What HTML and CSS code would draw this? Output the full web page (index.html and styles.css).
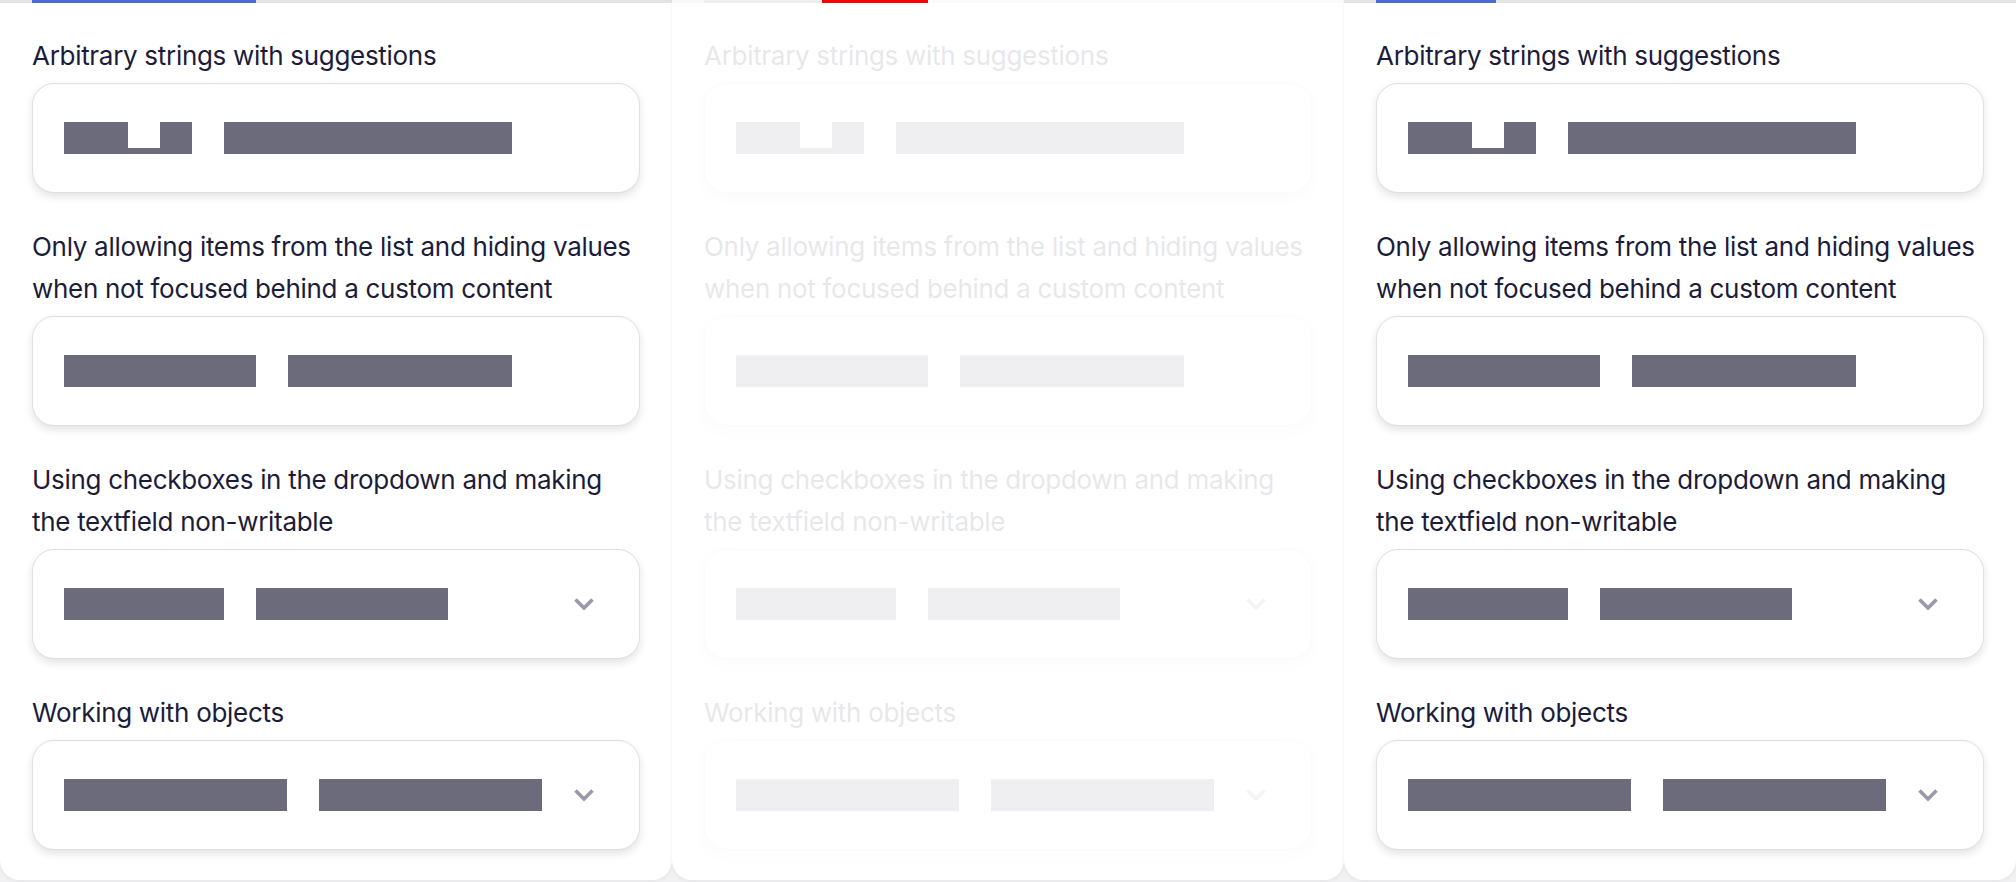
FILE: index.html
```html
<!DOCTYPE html>
<html lang="en">
<head>
<meta charset="utf-8">
<title>Autocomplete examples</title>
<link rel="stylesheet" href="styles.css">
</head>
<body>
<div class="panels">

  <section class="panel">
    <div class="track"><span class="ind ind-wide"></span></div>
    <div class="body">
      <div class="field">
        <div class="label">Arbitrary strings with suggestions</div>
        <div class="box">
          <div class="notched"><i class="seg s64"></i><i class="seg stub"></i><i class="seg s32"></i></div>
          <div class="bar w288"></div>
        </div>
      </div>
      <div class="field">
        <div class="label">Only allowing items from the list and hiding values when not focused behind a custom content</div>
        <div class="box">
          <div class="bar w192"></div>
          <div class="bar w224"></div>
        </div>
      </div>
      <div class="field">
        <div class="label">Using checkboxes in the dropdown and making the textfield non-writable</div>
        <div class="box">
          <div class="bar w160"></div>
          <div class="bar w192"></div>
          <svg class="chev" viewBox="0 0 20 12" width="20" height="12"><polyline points="1.5,1.5 10,10 18.5,1.5"/></svg>
        </div>
      </div>
      <div class="field">
        <div class="label">Working with objects</div>
        <div class="box">
          <div class="bar w224"></div>
          <div class="bar w224"></div>
          <svg class="chev" viewBox="0 0 20 12" width="20" height="12"><polyline points="1.5,1.5 10,10 18.5,1.5"/></svg>
        </div>
      </div>
    </div>
  </section>

  <section class="panel">
    <div class="track track-faded"><span class="tf-a"></span><span class="tf-b"></span><span class="tf-red"></span></div>
    <div class="body faded">
      <div class="field">
        <div class="label">Arbitrary strings with suggestions</div>
        <div class="box">
          <div class="notched"><i class="seg s64"></i><i class="seg stub"></i><i class="seg s32"></i></div>
          <div class="bar w288"></div>
        </div>
      </div>
      <div class="field">
        <div class="label">Only allowing items from the list and hiding values when not focused behind a custom content</div>
        <div class="box">
          <div class="bar w192"></div>
          <div class="bar w224"></div>
        </div>
      </div>
      <div class="field">
        <div class="label">Using checkboxes in the dropdown and making the textfield non-writable</div>
        <div class="box">
          <div class="bar w160"></div>
          <div class="bar w192"></div>
          <svg class="chev" viewBox="0 0 20 12" width="20" height="12"><polyline points="1.5,1.5 10,10 18.5,1.5"/></svg>
        </div>
      </div>
      <div class="field">
        <div class="label">Working with objects</div>
        <div class="box">
          <div class="bar w224"></div>
          <div class="bar w224"></div>
          <svg class="chev" viewBox="0 0 20 12" width="20" height="12"><polyline points="1.5,1.5 10,10 18.5,1.5"/></svg>
        </div>
      </div>
    </div>
  </section>

  <section class="panel">
    <div class="track"><span class="ind ind-narrow"></span></div>
    <div class="body">
      <div class="field">
        <div class="label">Arbitrary strings with suggestions</div>
        <div class="box">
          <div class="notched"><i class="seg s64"></i><i class="seg stub"></i><i class="seg s32"></i></div>
          <div class="bar w288"></div>
        </div>
      </div>
      <div class="field">
        <div class="label">Only allowing items from the list and hiding values when not focused behind a custom content</div>
        <div class="box">
          <div class="bar w192"></div>
          <div class="bar w224"></div>
        </div>
      </div>
      <div class="field">
        <div class="label">Using checkboxes in the dropdown and making the textfield non-writable</div>
        <div class="box">
          <div class="bar w160"></div>
          <div class="bar w192"></div>
          <svg class="chev" viewBox="0 0 20 12" width="20" height="12"><polyline points="1.5,1.5 10,10 18.5,1.5"/></svg>
        </div>
      </div>
      <div class="field">
        <div class="label">Working with objects</div>
        <div class="box">
          <div class="bar w224"></div>
          <div class="bar w224"></div>
          <svg class="chev" viewBox="0 0 20 12" width="20" height="12"><polyline points="1.5,1.5 10,10 18.5,1.5"/></svg>
        </div>
      </div>
    </div>
  </section>

</div>
</body>
</html>
```

FILE: styles.css
```css
html, body {
  margin: 0;
  padding: 0;
}

body {
  background: #f1f1f3;
  font-family: Inter, "Noto Sans", sans-serif;
  color: #1c1c3a;
  overflow: hidden;
}

.panels {
  display: grid;
  grid-template-columns: repeat(3, 672px);
  height: 882px;
}

.panel {
  background: #ffffff;
  border-radius: 0 0 20px 20px;
  height: 880px;
  box-shadow: 0 1px 4px rgba(0, 0, 0, 0.06);
  display: flex;
  flex-direction: column;
}

.track {
  height: 3px;
  background: #e4e4e6;
  display: flex;
  flex: none;
}

.ind {
  display: block;
  height: 3px;
  margin-left: 32px;
  background: #4c6ad6;
}

.ind-wide { width: 224px; }
.ind-narrow { width: 120px; }

.track-faded {
  background: #fafafa;
}

.tf-a { width: 32px; background: #f8f8f8; }
.tf-b { width: 118px; background: #eeeeee; }
.tf-red { width: 106px; background: #ff0000; }

.body {
  padding: 30px 32px 0;
}

.faded {
  opacity: 0.1;
}

.field {
  margin-bottom: 31px;
}

.label {
  font-size: 26px;
  line-height: 42px;
  padding-top: 2px;
  margin-bottom: 6px;
  letter-spacing: -0.3px;
  margin-right: -2px;
}

.box {
  box-sizing: border-box;
  height: 110px;
  border: 1px solid #dedee3;
  border-radius: 22px;
  background: #ffffff;
  box-shadow: 0 4px 8px rgba(0, 0, 0, 0.11);
  display: flex;
  align-items: center;
  gap: 32px;
  padding: 0 45px 0 31px;
}

.bar {
  height: 32px;
  background: #6b6b7c;
}

.w160 { width: 160px; }
.w192 { width: 192px; }
.w224 { width: 224px; }
.w288 { width: 288px; }

.notched {
  display: flex;
  align-items: flex-end;
  height: 32px;
}

.seg {
  display: block;
  background: #6b6b7c;
  height: 32px;
}

.s64 { width: 64px; }
.s32 { width: 32px; }
.stub { width: 32px; height: 6px; }

.chev {
  margin-left: auto;
  fill: none;
  stroke: #9a9aaa;
  stroke-width: 3.6;
  flex: none;
}
```
